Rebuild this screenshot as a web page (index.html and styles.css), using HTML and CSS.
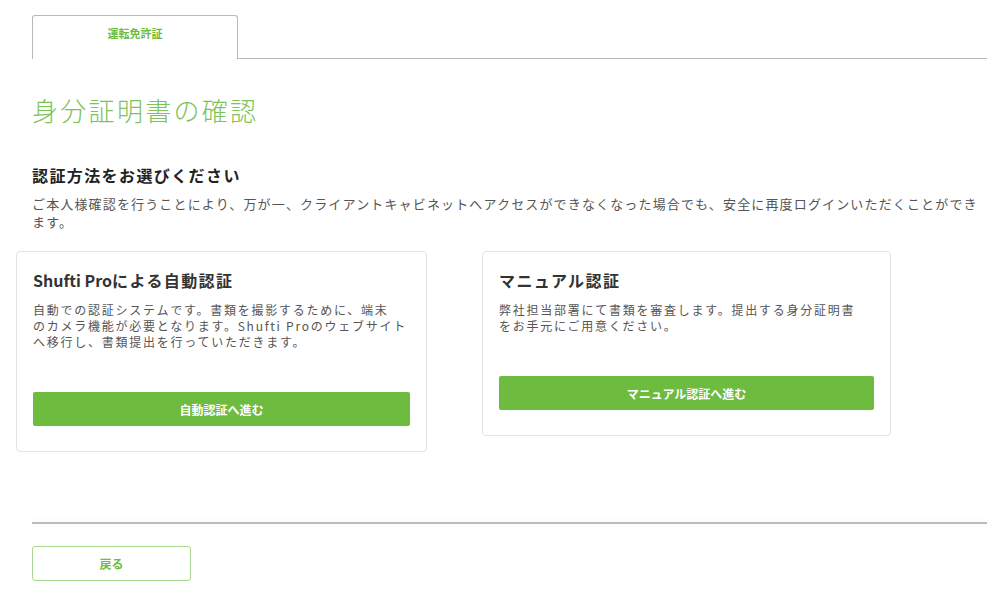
FILE: index.html
```html
<!DOCTYPE html>
<html lang="ja">
<head>
<meta charset="utf-8">
<title>身分証明書の確認</title>
<link rel="stylesheet" href="styles.css">
</head>
<body>
<div class="page">
  <div class="tabs">
    <div class="tab">運転免許証</div>
  </div>

  <h1 class="title">身分証明書の確認</h1>

  <h2 class="subtitle">認証方法をお選びください</h2>
  <p class="intro">ご本人様確認を行うことにより、万が一、クライアントキャビネットへアクセスができなくなった場合でも、安全に再度ログインいただくことができます。</p>

  <div class="cards">
    <div class="card card-auto">
      <h3 class="card-title"><span class="latin">Shufti Pro</span>による自動認証</h3>
      <p class="card-text">自動での認証システムです。書類を撮影するために、端末<br>のカメラ機能が必要となります。Shufti Proのウェブサイト<br>へ移行し、書類提出を行っていただきます。</p>
      <button class="btn-primary">自動認証へ進む</button>
    </div>
    <div class="card card-manual">
      <h3 class="card-title">マニュアル認証</h3>
      <p class="card-text">弊社担当部署にて書類を審査します。提出する身分証明書<br>をお手元にご用意ください。</p>
      <button class="btn-primary">マニュアル認証へ進む</button>
    </div>
  </div>

  <div class="divider"></div>

  <button class="btn-back">戻る</button>
</div>
</body>
</html>
```

FILE: styles.css
```css
html, body {
  margin: 0;
  padding: 0;
  background: #ffffff;
}

body {
  font-family: "Noto Sans CJK JP", sans-serif;
  color: #333333;
}

.page {
  width: 955px;
  margin-left: 32px;
  padding-top: 15px;
}

.tabs {
  display: flex;
  height: 44px;
  border-bottom: 1px solid #b9b9b9;
  box-sizing: border-box;
}

.tab {
  width: 206px;
  height: 44px;
  box-sizing: border-box;
  border: 1px solid #b9b9b9;
  border-bottom: none;
  border-radius: 3px 3px 0 0;
  background: #ffffff;
  margin-bottom: -1px;
  padding-top: 9px;
  text-align: center;
  font-size: 11px;
  font-weight: 700;
  line-height: 16px;
  color: #6cbd3e;
}

.title {
  margin: 33px 0 0 0;
  font-size: 26px;
  font-weight: 300;
  line-height: 36px;
  letter-spacing: 2.3px;
  color: #7cc35a;
}

.subtitle {
  margin: 36px 0 0 0;
  font-size: 16px;
  font-weight: 700;
  line-height: 22px;
  letter-spacing: 1.4px;
  color: #222222;
}

.intro {
  margin: 9px 0 0 0;
  font-size: 13px;
  line-height: 18px;
  letter-spacing: 1.15px;
  color: #555555;
}

.cards {
  display: flex;
  align-items: flex-start;
  gap: 55px;
  margin: 20px 0 0 -16px;
}

.card {
  box-sizing: border-box;
  border: 1px solid #e3e3e3;
  border-radius: 4px;
  background: #ffffff;
  padding: 17px 16px 25px 16px;
}

.card-auto {
  width: 411px;
}

.card-manual {
  width: 409px;
}

.card-title {
  margin: 0;
  font-size: 16px;
  font-weight: 700;
  line-height: 22px;
  letter-spacing: 1.4px;
  color: #333333;
}

.latin {
  letter-spacing: 0;
}

.card-text {
  margin: 11px 0 42px 0;
  font-size: 12px;
  line-height: 16px;
  letter-spacing: 1.75px;
  color: #555555;
  white-space: nowrap;
}

.btn-primary {
  display: block;
  width: 100%;
  height: 34px;
  border: none;
  border-radius: 2px;
  background: #6dbb3f;
  color: #ffffff;
  font-family: "Noto Sans CJK JP", sans-serif;
  font-size: 12px;
  font-weight: 700;
  cursor: pointer;
}

.divider {
  margin-top: 70px;
  height: 2px;
  background: #bdbdbd;
  box-shadow: 0 0 6px rgba(0, 0, 0, 0.08);
}

.btn-back {
  display: block;
  margin-top: 22px;
  width: 159px;
  height: 35px;
  box-sizing: border-box;
  border: 1.5px solid #a8d88e;
  border-radius: 3px;
  background: #ffffff;
  color: #6cbd3e;
  font-family: "Noto Sans CJK JP", sans-serif;
  font-size: 12px;
  font-weight: 700;
  cursor: pointer;
}
```
